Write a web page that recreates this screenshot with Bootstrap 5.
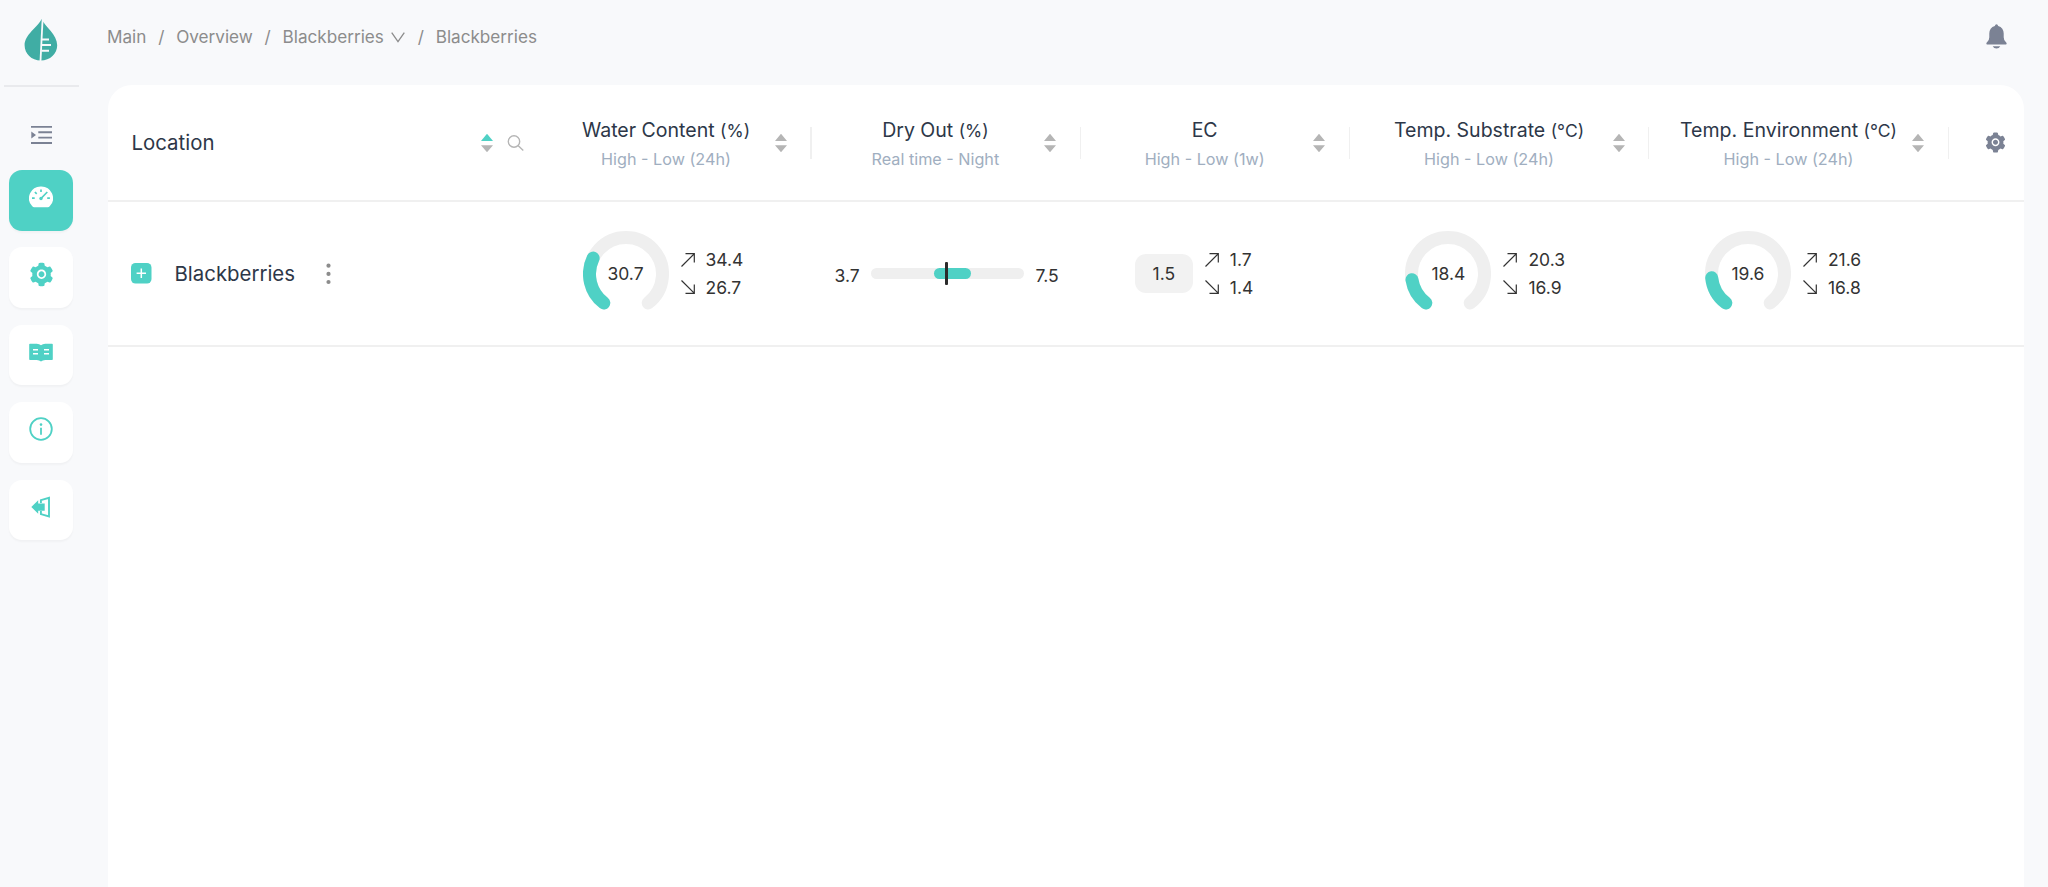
<!DOCTYPE html>
<html lang="en">
<head>
<meta charset="utf-8">
<meta name="viewport" content="width=device-width, initial-scale=1">
<title>Overview - Blackberries</title>
<link href="https://cdn.jsdelivr.net/npm/bootstrap@5.3.0/dist/css/bootstrap.min.css" rel="stylesheet">
<style>
  :root { --teal: #4fd1c5; --ink: #2d3748; --slate: #7b8294; --line: #f0f0f0; }
  body { background: #f8f9fb; font-family: Inter, "Liberation Sans", sans-serif; color: #333; font-size: 17.5px; }
  svg { display: block; flex: none; }
  .side-menu { width: 82px; flex: none; padding-top: 19px; }
  .side-rule { width: 75px; height: 2px; background: #e9eaed; margin: 24px 0 38px; }
  .side-tile { width: 64px; height: 60.5px; border-radius: 13px; background: #fff; color: var(--teal); margin-bottom: 16.9px; padding-bottom: 6px; box-shadow: 0 2px 2px rgba(0,0,0,.03); }
  .side-tile.active { background: var(--teal); color: #fff; }
  .fold-icon { margin-bottom: 25px; color: var(--slate); }
  .main-area { margin-left: 25px; margin-right: 24px; }
  .top-bar { height: 85px; padding: 0 17px 12px 0; }
  .crumbs { color: #8c8c8c; font-size: 17.15px; line-height: 24px; padding-top: 1px; }
  .crumbs .sep { margin: 0 11.8px; }
  .crumbs .crumb-arrow { margin: 0 1px 0 7px; }
  .panel { height: 802px; margin-left: .5px; background: #fff; border-radius: 24px 24px 0 0; overflow: hidden; }
  .grid-row { display: grid; grid-template-columns: 434.5px 269.5px 269.3px 269.2px 299.5px 299.5px 75px; border-bottom: 2px solid var(--line); }
  .head-row { height: 117px; }
  .data-row { height: 145px; }
  .head-cell { padding: 0 24.5px 0 24px; gap: 9px; position: relative; color: var(--ink); }
  .head-cell.location { padding-right: 9px; }
  .head-cell.ruled::after { content: ""; position: absolute; right: 0; top: 42px; width: 1.25px; height: 32px; background: var(--line); }
  .col-title { font-size: 19.55px; line-height: 29px; }
  .col-title span { font-size: 17.5px; }
  .col-sub { font-size: 16.2px; line-height: 28px; color: #a0aec0; }
  .loc { font-size: 20.4px; color: var(--ink); padding-top: 2px; }
  .dial { width: 86px; height: 86px; position: relative; flex: none; }
  .dial span { position: absolute; inset: 0; line-height: 85px; text-align: center; }
  .trend { gap: 11px; line-height: 27.2px; }
  .ec-pill { width: 58px; height: 39px; line-height: 39px; border-radius: 11px; background: #f2f2f2; text-align: center; }
  .range-track { width: 153px; height: 11px; border-radius: 6px; background: #efefef; position: relative; flex: none; }
  .range-fill { position: absolute; top: 0; height: 11px; border-radius: 6px; background: var(--teal); }
  .range-mark { position: absolute; top: -6px; width: 3px; height: 23px; border-radius: 1px; background: #2b2b2b; }
  .range-label { padding-top: 5px; }
</style>
</head>
<body>
<svg width="0" height="0" class="position-absolute">
  <symbol id="gear" viewBox="0 0 1024 1024"><path fill="currentColor" d="M512.5 390.6c-29.9 0-57.9 11.6-79.1 32.8-21.1 21.2-32.8 49.2-32.8 79.1 0 29.9 11.7 57.9 32.8 79.1 21.2 21.1 49.2 32.8 79.1 32.8 29.9 0 57.9-11.7 79.1-32.8 21.1-21.2 32.8-49.2 32.8-79.1 0-29.9-11.7-57.9-32.8-79.1a110.96 110.96 0 00-79.1-32.8zm412.3 235.5l-65.4-55.9c3.1-19 4.7-38.4 4.7-57.7s-1.6-38.8-4.7-57.7l65.4-55.9a32.03 32.03 0 009.3-35.2l-.9-2.6a442.5 442.5 0 00-79.6-137.7l-1.8-2.1a32.12 32.12 0 00-35.1-9.5l-81.2 28.9c-30-24.6-63.4-44-99.6-57.5l-15.7-84.9a32.05 32.05 0 00-25.8-25.7l-2.7-.5c-52-9.4-106.8-9.4-158.8 0l-2.7.5a32.05 32.05 0 00-25.8 25.7l-15.8 85.3a353.44 353.44 0 00-98.9 57.3l-81.8-29.1a32 32 0 00-35.1 9.5l-1.8 2.1a445.93 445.93 0 00-79.6 137.7l-.9 2.6c-4.5 12.5-.8 26.5 9.3 35.2l66.2 56.5c-3.1 18.8-4.6 38-4.6 57 0 19.2 1.5 38.4 4.6 57l-66 56.5a32.03 32.03 0 00-9.3 35.2l.9 2.6c18.1 50.3 44.8 96.8 79.6 137.7l1.8 2.1a32.12 32.12 0 0035.1 9.5l81.8-29.1c29.8 24.5 63 43.9 98.9 57.3l15.8 85.3a32.05 32.05 0 0025.8 25.7l2.7.5a448.27 448.27 0 00158.8 0l2.7-.5a32.05 32.05 0 0025.8-25.7l15.7-84.9c36.2-13.6 69.6-32.9 99.6-57.5l81.2 28.9a32 32 0 0035.1-9.5l1.8-2.1c34.8-41.1 61.5-87.4 79.6-137.7l.9-2.6c4.3-12.4.6-26.3-9.5-35zm-412.3 52.2c-97.1 0-175.8-78.7-175.8-175.8s78.7-175.8 175.8-175.8 175.8 78.7 175.8 175.8-78.7 175.8-175.8 175.8z"/></symbol>
  <symbol id="sorter" viewBox="0 0 12 20"><path fill="#b5b5b5" d="M6 .8 12 8H0zM0 12.2h12L6 19.2z"/></symbol>
  <symbol id="trend-up" viewBox="0 0 14 14"><path fill="none" stroke="#333" stroke-width="1.2" d="M.5 13.5 13.2.8M4.5.7h8.8v8.8"/></symbol>
  <symbol id="trend-down" viewBox="0 0 14 14"><path fill="none" stroke="#333" stroke-width="1.2" d="M.5.5 13.2 13.2M4.5 13.3h8.8V4.5"/></symbol>
</svg>

<div class="d-flex vh-100 overflow-hidden">
  <nav class="side-menu d-flex flex-column align-items-center">
    <svg width="34" height="42" viewBox="0 0 34 42">
      <path fill="#40ada4" d="M17.6 0C14 8 .6 15.500.6 26.300c0 8.500 6.900 15.200 16.200 15.200S33.200 34.800 33.200 26.300C33.200 15.500 21.200 8 17.600 0z"/>
      <path fill="none" stroke="#f8f9fb" stroke-width="1.8" d="M18.600 0 16.500 42"/>
      <path fill="none" stroke="#f8f9fb" stroke-width="2" d="M17.500 20.500h7.500M17.500 26h9.500M17.500 31.700h7.500"/>
    </svg>
    <div class="side-rule"></div>
    <svg class="fold-icon" width="21" height="20" viewBox="0 0 21 20">
      <path fill="none" stroke="currentColor" stroke-width="1.900" d="M0 1.900h21M7.300 7.300H21M7.300 12.600H21M0 18h21"/>
      <path fill="currentColor" d="M.3 6.500 5 10 .3 13.500z"/>
    </svg>
    <a class="side-tile active d-flex align-items-center justify-content-center">
      <svg width="24" height="22" viewBox="0 0 24 22">
        <path fill="#fff" d="M12 .5a11.700 11.700 0 0 0-8.900 19.600q.8 1.200 2.200 1.200h13.400q1.400 0 2.200-1.200A11.700 11.700 0 0 0 12 .5z"/>
        <path fill="none" stroke="#4fd1c5" stroke-width="1.700" d="M12 3.400v2.700M5.900 6l1.800 1.800M3 12.200h2.700M18.200 12.200h2.700M11.500 13 18.300 6"/>
        <circle cx="12" cy="12.500" r="1.700" fill="#4fd1c5"/>
      </svg>
    </a>
    <a class="side-tile d-flex align-items-center justify-content-center"><svg width="27" height="27"><use href="#gear"/></svg></a>
    <a class="side-tile d-flex align-items-center justify-content-center">
      <svg width="24" height="19" viewBox="0 0 24 19">
        <path fill="currentColor" d="M1 .7h6.800Q10.300.7 12 2.300 13.700.7 16.200.7H23q.8 0 .8.8v14.700q0 .8-.8.8h-6.800q-2.600 0-4.200 1.500Q10.400 17 7.800 17H1q-.8 0-.8-.8V1.500Q.2.700 1 .7z"/>
        <path fill="none" stroke="#fff" stroke-width="1.400" d="M4 6.800h5M4 10.700h5M15 6.800h5M15 10.700h5"/>
      </svg>
    </a>
    <a class="side-tile d-flex align-items-center justify-content-center">
      <svg width="24" height="24" viewBox="0 0 24 24">
        <circle cx="12" cy="12" r="10.800" fill="none" stroke="currentColor" stroke-width="1.800"/>
        <path fill="none" stroke="currentColor" stroke-width="1.800" d="M12 10.700v7"/><circle cx="12" cy="7.600" r="1.300" fill="currentColor"/>
      </svg>
    </a>
    <a class="side-tile d-flex align-items-center justify-content-center">
      <svg width="20" height="22" viewBox="0 0 20 22">
        <path fill="none" stroke="currentColor" stroke-width="1.900" d="M9.900 7V4.200L18 1.800v18.600l-8.100-2.300V15"/>
        <path fill="currentColor" d="M.3 11 7.200 4.300V7.500h6.500v7.200H7.200v3z"/>
      </svg>
    </a>
  </nav>

  <main class="main-area flex-grow-1">
    <header class="top-bar d-flex align-items-center justify-content-between">
      <div class="crumbs d-flex align-items-center">
        <span>Main</span><span class="sep">/</span><span>Overview</span><span class="sep">/</span><span>Blackberries</span>
        <svg class="crumb-arrow" width="14" height="11" viewBox="0 0 14 11"><path fill="none" stroke="#8c8c8c" stroke-width="1.300" d="M.7.6 7 9.600 13.300.6"/></svg>
        <span class="sep">/</span><span>Blackberries</span>
      </div>
      <svg width="21" height="25" viewBox="0 0 21 25">
        <path fill="#7b8294" d="M10.500.3q1.300 0 1.700 1.600c3.600.9 5.500 3.700 5.500 7.600v3.800q0 2.600 1.900 4.400 1.500 1.300.9 2.200-.2.500-1 .5H1.500q-.8 0-1-.5-.6-.9.900-2.200 1.900-1.800 1.900-4.400V9.500c0-3.900 1.900-6.700 5.500-7.600Q9.200.3 10.500.3zM6.700 22.200h7.600q-1.100 2.300-3.800 2.300t-3.800-2.300z"/>
      </svg>
    </header>

    <section class="panel">
      <div class="grid-row head-row">
        <div class="head-cell location d-flex align-items-center">
          <span class="loc flex-grow-1">Location</span>
          <svg width="12" height="20" viewBox="0 0 12 20"><path fill="#4fd1c5" d="M6 .8 12 8H0z"/><path fill="#b5b5b5" d="M0 12.200h12L6 19.200z"/></svg>
          <svg width="31" height="16" viewBox="0 0 31 16"><g fill="none" stroke="#b5b5b5" stroke-width="1.400"><circle cx="12" cy="6.500" r="5.700"/><path d="m16 10.500 5.300 5"/></g></svg>
        </div>
        <div class="head-cell ruled d-flex align-items-center">
          <div class="flex-grow-1 text-center pt-1"><div class="col-title">Water Content <span>(%)</span></div><div class="col-sub">High - Low (24h)</div></div>
          <svg width="12" height="20"><use href="#sorter"/></svg>
        </div>
        <div class="head-cell ruled d-flex align-items-center">
          <div class="flex-grow-1 text-center pt-1"><div class="col-title">Dry Out <span>(%)</span></div><div class="col-sub">Real time - Night</div></div>
          <svg width="12" height="20"><use href="#sorter"/></svg>
        </div>
        <div class="head-cell ruled d-flex align-items-center">
          <div class="flex-grow-1 text-center pt-1"><div class="col-title">EC</div><div class="col-sub">High - Low (1w)</div></div>
          <svg width="12" height="20"><use href="#sorter"/></svg>
        </div>
        <div class="head-cell ruled d-flex align-items-center">
          <div class="flex-grow-1 text-center pt-1"><div class="col-title">Temp. Substrate <span>(°C)</span></div><div class="col-sub">High - Low (24h)</div></div>
          <svg width="12" height="20"><use href="#sorter"/></svg>
        </div>
        <div class="head-cell ruled d-flex align-items-center">
          <div class="flex-grow-1 text-center pt-1"><div class="col-title text-nowrap">Temp. Environment <span>(°C)</span></div><div class="col-sub">High - Low (24h)</div></div>
          <svg width="12" height="20"><use href="#sorter"/></svg>
        </div>
        <div class="d-flex align-items-center" style="padding-left:35px;color:#7b8294"><svg width="23" height="23"><use href="#gear"/></svg></div>
      </div>

      <div class="grid-row data-row">
        <div class="d-flex align-items-center" style="padding-left:23.500px">
          <svg width="21" height="21" viewBox="0 0 21 21"><rect width="20.500" height="20.500" rx="4.500" fill="#4fd1c5"/><path stroke="#fff" stroke-width="1.500" d="M5.600 10.200h9.400M10.300 5.500v9.400"/></svg>
          <span class="loc" style="margin-left:22.500px">Blackberries</span>
          <svg style="margin-left:30.500px" width="5" height="22" viewBox="0 0 5 22" fill="#8c8c8c"><circle cx="2.500" cy="2.700" r="2.100"/><circle cx="2.500" cy="10.900" r="2.100"/><circle cx="2.500" cy="19" r="2.100"/></svg>
        </div>
        <div class="d-flex align-items-center" style="padding-left:40.500px">
          <div class="dial">
            <svg width="86" height="86" viewBox="-43 -43 86 86" fill="none" stroke-width="13" stroke-linecap="round"><path stroke="#efefef" d="M-22.220 28.960A36.500 36.500 0 1 1 22.220 28.960"/><path stroke="#4fd1c5" d="M-22.220 28.960A36.500 36.500 0 0 1-32.860-15.890"/></svg>
            <span>30.7</span>
          </div>
          <div class="ms-2 ps-1">
            <div class="trend d-flex align-items-center"><svg width="14" height="14"><use href="#trend-up"/></svg>34.4</div>
            <div class="trend d-flex align-items-center"><svg width="14" height="14"><use href="#trend-down"/></svg>26.7</div>
          </div>
        </div>
        <div class="d-flex align-items-center" style="padding-left:23px">
          <span style="width:36px" class="range-label">3.7</span>
          <div class="range-track"><div class="range-fill" style="left:63px;width:37px"></div><div class="range-mark" style="left:74px"></div></div>
          <span style="margin-left:12px" class="range-label">7.5</span>
        </div>
        <div class="d-flex align-items-center" style="padding-left:54px">
          <div class="ec-pill">1.5</div>
          <div class="ms-2 ps-1">
            <div class="trend d-flex align-items-center"><svg width="14" height="14"><use href="#trend-up"/></svg>1.7</div>
            <div class="trend d-flex align-items-center"><svg width="14" height="14"><use href="#trend-down"/></svg>1.4</div>
          </div>
        </div>
        <div class="d-flex align-items-center" style="padding-left:55.400px">
          <div class="dial">
            <svg width="86" height="86" viewBox="-43 -43 86 86" fill="none" stroke-width="13" stroke-linecap="round"><path stroke="#efefef" d="M-22.220 28.960A36.500 36.500 0 1 1 22.220 28.960"/><path stroke="#4fd1c5" d="M-22.220 28.960A36.500 36.500 0 0 1-36.040 5.770"/></svg>
            <span>18.4</span>
          </div>
          <div class="ms-2 ps-1">
            <div class="trend d-flex align-items-center"><svg width="14" height="14"><use href="#trend-up"/></svg>20.3</div>
            <div class="trend d-flex align-items-center"><svg width="14" height="14"><use href="#trend-down"/></svg>16.9</div>
          </div>
        </div>
        <div class="d-flex align-items-center" style="padding-left:55.400px">
          <div class="dial">
            <svg width="86" height="86" viewBox="-43 -43 86 86" fill="none" stroke-width="13" stroke-linecap="round"><path stroke="#efefef" d="M-22.220 28.960A36.500 36.500 0 1 1 22.220 28.960"/><path stroke="#4fd1c5" d="M-22.220 28.960A36.500 36.500 0 0 1-36.300 3.820"/></svg>
            <span>19.6</span>
          </div>
          <div class="ms-2 ps-1">
            <div class="trend d-flex align-items-center"><svg width="14" height="14"><use href="#trend-up"/></svg>21.6</div>
            <div class="trend d-flex align-items-center"><svg width="14" height="14"><use href="#trend-down"/></svg>16.8</div>
          </div>
        </div>
        <div></div>
      </div>
    </section>
  </main>
</div>
<script src="https://cdn.jsdelivr.net/npm/bootstrap@5.3.0/dist/js/bootstrap.bundle.min.js"></script>
</body>
</html>
